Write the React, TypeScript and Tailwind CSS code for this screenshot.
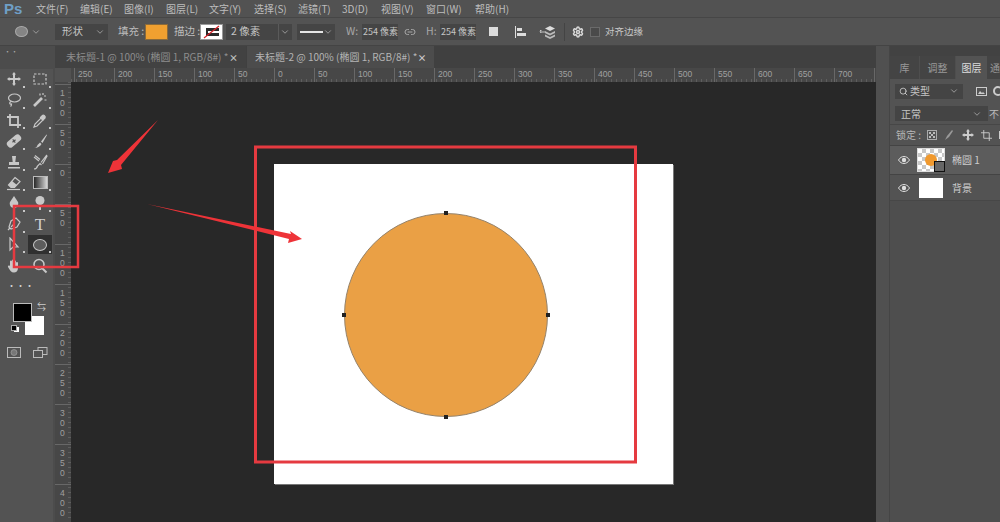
import React from 'react';
import { ChevronDown, Link2, Search, Settings } from 'lucide-react';

const menus = [
  ['文件(F)', 'w-[44px]'],
  ['编辑(E)', 'w-[44px]'],
  ['图像(I)', 'w-[42px]'],
  ['图层(L)', 'w-[43px]'],
  ['文字(Y)', 'w-[45px]'],
  ['选择(S)', 'w-[44px]'],
  ['滤镜(T)', 'w-[44px]'],
  ['3D(D)', 'w-[39px]'],
  ['视图(V)', 'w-[45px]'],
  ['窗口(W)', 'w-[49px]'],
  ['帮助(H)', 'w-[40px]'],
];

const hLabels = ['250', '200', '150', '100', '50', '0', '50', '100', '150', '200', '250', '300', '350', '400', '450', '500', '550', '600', '650', '700', ''];
const vLabels = ['100', '50', '0', '50', '100', '150', '200', '250', '300', '350', '400'];

type SvgProps = { children: React.ReactNode };
const Ic = ({ children }: SvgProps) => (
  <svg viewBox="0 0 16 16" className="w-[16px] h-[16px] text-[#c8c8c8]" fill="none" stroke="currentColor" strokeWidth="1.200">
    {children}
  </svg>
);

const tools: { icon: React.ReactNode; more?: boolean; active?: boolean }[] = [
  { more: true, icon: <Ic><path d="M8 1l2 2.500H9V7h3.500V6L15 8l-2.500 2V9H9v3.500h1L8 15l-2-2.500h1V9H3.500v1L1 8l2.500-2v1H7V3.500H6z" fill="currentColor" stroke="none" /></Ic> },
  { more: true, icon: <Ic><rect x="2" y="3" width="12" height="10" strokeDasharray="2.500 1.500" /></Ic> },
  { more: true, icon: <Ic><ellipse cx="8.500" cy="6" rx="6" ry="4" /><path d="M5 9.500c-2 1-1.500 3 .5 2.500 0 1 0 2-1 2.500" /></Ic> },
  { more: true, icon: <Ic><path d="M2 14l8-8" strokeWidth="2.600" /><path d="M11 1v2M14 4h-2M14.500 8h-2M8 1.500v2" /></Ic> },
  { more: true, icon: <Ic><path d="M1 4h11v11M4 1v11h11" strokeWidth="1.800" /></Ic> },
  { more: true, icon: <Ic><path d="M2 14l1-3 6-6 2 2-6 6z" /><path d="M8.500 4.500l2-2c1-1 3.500 1 2.500 2.500l-2 2z" fill="currentColor" /></Ic> },
  { more: true, icon: <Ic><g transform="rotate(-40 8 8)"><rect x="0" y="4.500" width="16" height="7" rx="3" fill="currentColor" stroke="none" /><path d="M6 8h4M8 6v4" stroke="#535353" /></g></Ic> },
  { more: true, icon: <Ic><path d="M2 15c2 0 3-1 3.500-3L8 9.500l1.500 1.500C8.500 13 6 15 2 15zM9 8.500L14.500 1.500l.5.5L10.500 10z" fill="currentColor" stroke="none" /></Ic> },
  { more: true, icon: <Ic><path d="M6 2h4l-.7 6h3.700v3H3V8h3.700zM2 13h12v1.500H2z" fill="currentColor" stroke="none" /></Ic> },
  { more: true, icon: <Ic><path d="M2 15c2 0 3-1 3.500-3L8 9.500l1.500 1.500M9 8.500L14.500 1.500l.5.5L10.500 10M2 3l5 4M3 1.500l5 4" /></Ic> },
  { more: true, icon: <Ic><path d="M9 2.500l5 4-5.500 6H5L2.500 10z" /><path d="M2.500 10L6 6l5 4-2.500 2.500H5z" fill="currentColor" stroke="none" /><path d="M1 14.500h13" /></Ic> },
  { more: true, icon: <svg className="w-[15px] h-[13px]" viewBox="0 0 15 13"><defs><linearGradient id="gr"><stop offset="0" stopColor="#222" /><stop offset="1" stopColor="#ddd" /></linearGradient></defs><rect x=".5" y=".5" width="14" height="12" fill="url(#gr)" stroke="#bbb" /></svg> },
  { more: true, icon: <Ic><path d="M8 1l4 6c1 3-1 6-4 6s-5-3-4-6z" fill="currentColor" stroke="none" /></Ic> },
  { more: true, icon: <Ic><circle cx="8" cy="5.500" r="4.500" fill="currentColor" stroke="none" /><path d="M8 10v5" strokeWidth="2" /></Ic> },
  { more: true, icon: <Ic><path d="M3 11L5 5 10 2l4 4-3 5-6 2zM5 11l3-3" /><path d="M2 14l2-2" /></Ic> },
  { icon: <span className="text-[#d0d0d0] text-[17px] leading-none font-['Liberation_Serif',serif]">T</span> },
  { more: true, icon: <Ic><path d="M4 1v12l3-3h5z" /></Ic> },
  { more: true, active: true, icon: <span className="block w-[14px] h-[12px] rounded-[50%] border border-[#c8c8c8] bg-[#5c5c5c]" /> },
  { icon: <Ic><path d="M4 6V3.500a1 1 0 012 0V2.500a1 1 0 012 0v1a1 1 0 012 0v1.500a1 1 0 012 0v5c0 3-2 4.500-4 4.500-3 0-4-2-6-5.500-.5-1 1-2 2-1z" fill="currentColor" stroke="none" /></Ic> },
  { icon: <Ic><circle cx="7" cy="6.500" r="5" strokeWidth="1.600" /><path d="M10.500 10.500l4 4" strokeWidth="2" /></Ic> },
];

const Tool = ({ icon, more, active }: { icon: React.ReactNode; more?: boolean; active?: boolean }) => (
  <div className="flex items-center justify-center h-[20.7px]">
    <div className={`relative w-[24px] h-[19px] flex items-center justify-center ${active ? 'bg-[#303030]' : ''}`}>
      {icon}
      {more && <span className="absolute right-[1px] bottom-[1px] w-[2px] h-[2px] bg-[#c8c8c8]" />}
    </div>
  </div>
);

const Field = ({ className, children }: { className: string; children: React.ReactNode }) => (
  <div className={`h-[16px] bg-[#454545] flex items-center text-[#c4c4c4] ${className}`}>{children}</div>
);

const Dropdown = ({ className }: { className?: string }) => (
  <ChevronDown className={`w-[10px] h-[10px] text-[#a8a8a8] shrink-0 ${className ?? ''}`} />
);

const EyeIcon = () => (
  <svg viewBox="0 0 12 8" className="ml-[8px] w-[12px] h-[8px] shrink-0">
    <path d="M.5 4C2 1.500 4 .5 6 .5s4 1 5.500 3.500C10 6.500 8 7.500 6 7.500S2 6.500.5 4z" fill="none" stroke="#dedede" />
    <circle cx="6" cy="4" r="2.200" fill="#dedede" />
  </svg>
);

export default function App() {
  return (
    <div className="w-[1000px] h-[522px] overflow-hidden relative flex flex-col bg-[#535353] text-[#bdbdbd] text-[10.500px] leading-none font-['Noto_Sans_CJK_SC','Liberation_Sans',sans-serif]">
      {/* menu */}
      <div className="h-[18px] shrink-0 flex items-center bg-[#525252] border-b border-[#464646] text-[10px]">
        <span className="w-[36px] pl-[4px] text-[#6f9fc6] text-[15px] font-bold font-['Liberation_Sans',sans-serif]">Ps</span>
        {menus.map(([label, w]) => (
          <span key={label} className={`${w} whitespace-nowrap`}>{label}</span>
        ))}
      </div>

      {/* options bar */}
      <div className="h-[28px] shrink-0 flex items-center bg-[#535353] border-b border-[#444] whitespace-nowrap">
        <div className="w-[55px] flex items-center pl-[15px] gap-[3px]">
          <span className="w-[13px] h-[11px] rounded-[50%] bg-[#858585] border border-[#aaa]" />
          <Dropdown />
        </div>
        <Field className="w-[53px] justify-between pl-[7px] pr-[3px]">形状<Dropdown /></Field>
        <span className="ml-[10px] w-[27px]">填充 :</span>
        <span className="w-[23px] h-[16px] bg-[#f0a030] border border-[#8a6a3a]" />
        <span className="ml-[6px] w-[26px]">描边 :</span>
        <span className="w-[23px] h-[16px] bg-white border border-[#999] flex items-center justify-center">
          <svg viewBox="0 0 21 14" className="w-[21px] h-[14px]"><rect x="5" y="3" width="13" height="8" fill="#2a2a2a" /><rect x="7" y="6" width="14" height="2" fill="#fff" /><path d="M3 13L18 1" stroke="#d8232a" strokeWidth="1.300" /></svg>
        </span>
        <Field className="ml-[3px] w-[66px] justify-between pl-[5px] pr-[2px]">2 像素<span className="border-l border-[#5a5a5a] pl-[1px] h-full flex items-center"><Dropdown /></span></Field>
        <Field className="ml-[5px] w-[38px] justify-between pl-[3px] pr-[2px]"><span className="w-[23px] h-[2px] bg-[#e4e4e4]" /><Dropdown /></Field>
        <span className="ml-[11px] w-[16px] text-[#a8a8a8]">W:</span>
        <Field className="w-[36px] pl-[1px] text-[9px]">254 像素</Field>
        <Link2 className="ml-[6px] w-[12px] h-[12px] text-[#a8a8a8]" />
        <span className="ml-[10px] w-[14px] text-[#a8a8a8]">H:</span>
        <Field className="w-[36px] pl-[1px] text-[9px]">254 像素</Field>
        <span className="ml-[13px] w-[9px] h-[9px] bg-[#dcdcdc]" />
        <svg viewBox="0 0 14 14" className="ml-[16px] w-[14px] h-[14px]"><path d="M1.500 1v12" stroke="#ddd" /><path d="M3 3h5v3H3zM3 8h9v3H3z" fill="#ddd" /></svg>
        <svg viewBox="0 0 18 14" className="ml-[11px] w-[18px] h-[14px]"><path d="M3 7h3M1 6l1-1v3z" stroke="#ddd" strokeWidth=".8" /><path d="M11 1l5 2.500-5 2.500-5-2.500z" fill="#ddd" /><path d="M6 6l5 2.500L16 6v2l-5 2.500L6 8zM6 9.500l5 2.500 5-2.500v2L11 14l-5-2.500z" fill="#bbb" /></svg>
        <span className="ml-[7px] w-px h-[18px] bg-[#444]" />
        <Settings strokeWidth={3} className="ml-[7px] w-[12px] h-[12px] text-[#d8d8d8]" />
        <span className="ml-[6px] w-[10px] h-[10px] bg-[#4a4a4a] border border-[#6a6a6a]" />
        <span className="ml-[5px] text-[#c8c8c8] text-[9.500px]">对齐边缘</span>
      </div>

      <div className="flex-1 flex min-h-0">
        {/* tools */}
        <div className="w-[55px] shrink-0 flex flex-col bg-[#535353] border-r-2 border-[#4c4c4c]">
          <div className="h-[23px] shrink-0 pl-[4px] pt-[2px] text-[#aaa] text-[7px] bg-[#4c4c4c]">
            <div className="h-[10px]">••</div>
          </div>
          <div className="grid grid-cols-[26px_26px] pl-[1px]">
            {tools.map((t, i) => (
              <Tool key={i} icon={t.icon} more={t.more} active={t.active} />
            ))}
          </div>
          <div className="h-[21px] pl-[7px] pt-[5px] text-[#d4d4d4] text-[9px]">•••</div>
          <div className="relative h-[44px]">
            <span className="absolute left-[13px] top-[6px] w-[19px] h-[19px] bg-black border border-[#bbb] z-10" />
            <span className="absolute left-[25px] top-[19px] w-[19px] h-[19px] bg-white" />
            <span className="absolute left-[37px] top-[5px] text-[#ccc] text-[9px]">⇆</span>
            <span className="absolute left-[14px] top-[30px] w-[5px] h-[5px] bg-white" />
            <span className="absolute left-[11px] top-[28px] w-[6px] h-[6px] bg-black border border-[#aaa]" />
          </div>
          <div className="flex items-center pl-[7px] pt-[6px] gap-[12px]">
            <svg viewBox="0 0 14 11" className="w-[14px] h-[11px]"><rect x=".5" y=".5" width="13" height="10" fill="none" stroke="#bbb" /><circle cx="7" cy="5.500" r="3" fill="#777" stroke="#aaa" strokeWidth=".6" /></svg>
            <svg viewBox="0 0 15 11" className="w-[15px] h-[11px]"><rect x="5" y=".5" width="9" height="7" fill="none" stroke="#bbb" /><rect x=".5" y="3.500" width="9" height="7" fill="#535353" stroke="#bbb" /></svg>
          </div>
        </div>

        {/* document area */}
        <div className="w-[821px] shrink-0 flex flex-col">
          <div className="h-[22px] shrink-0 flex bg-[#404040] text-[#8d8d8d] text-[10px] whitespace-nowrap">
            <div className="w-[191px] flex items-center justify-between pl-[11px] pr-[8px] bg-[#424242]">
              <span>未标题-1 @ 100% (椭圆 1, RGB/8#) *</span><span className="font-bold text-[#c0c0c0] text-[9px]">×</span>
            </div>
            <div className="ml-px w-[187px] flex items-center justify-between pl-[8px] pr-[8px] bg-[#4c4c4c] text-[#b4b4b4]">
              <span>未标题-2 @ 100% (椭圆 1, RGB/8#) *</span><span className="font-bold text-[#c8c8c8] text-[9px]">×</span>
            </div>
          </div>
          <div className="h-[14px] shrink-0 flex bg-[#474747]">
            <div className="w-[16px] shrink-0 bg-[#525252]" />
            <div className="flex-1 flex pl-[3px] bg-[repeating-linear-gradient(90deg,#5e5e5e_0,#5e5e5e_1px,transparent_1px,transparent_5px)] bg-[length:100%_3px] bg-bottom bg-no-repeat overflow-hidden">
              {hLabels.map((l, i) => (
                <div key={i} className="w-[40px] shrink-0 h-full border-l border-[#686868] pl-[3px] pt-[2px] text-[8.500px] text-[#a0a0a0] font-['Liberation_Sans',sans-serif]">{l}</div>
              ))}
            </div>
          </div>
          <div className="flex-1 flex min-h-0">
            <div className="w-[16px] shrink-0 pt-[2px] overflow-hidden bg-[#474747] bg-[repeating-linear-gradient(180deg,#5e5e5e_0,#5e5e5e_1px,transparent_1px,transparent_5px)] bg-[length:3px_100%] bg-right bg-no-repeat">
              {vLabels.map((l, i) => (
                <div key={i} className="h-[40px] border-t border-[#686868] pt-[3px] pl-[5px] flex flex-col text-[8.500px] leading-[10px] text-[#a0a0a0] font-['Liberation_Sans',sans-serif]">
                  {l.split('').map((c, j) => <span key={j}>{c}</span>)}
                </div>
              ))}
            </div>
            {/* canvas */}
            <div className="flex-1 relative bg-[#282828]">
              <div className="absolute left-[203px] top-[82px] w-[399px] h-[320px] bg-white shadow-[1px_1px_0_#777]" />
              <div className="absolute left-[273px] top-[131px] w-[204px] h-[204px] rounded-full bg-[#eaa045] border border-[#94826a]" />
              <span className="absolute left-[373px] top-[129px] w-[4px] h-[4px] bg-[#222]" />
              <span className="absolute left-[373px] top-[333px] w-[4px] h-[4px] bg-[#222]" />
              <span className="absolute left-[271px] top-[231px] w-[4px] h-[4px] bg-[#222]" />
              <span className="absolute left-[475px] top-[231px] w-[4px] h-[4px] bg-[#222]" />
            </div>
          </div>
        </div>

        <div className="w-[14px] shrink-0 bg-[#505050] border-r border-[#454545]" />

        {/* panels */}
        <div className="flex-1 flex flex-col bg-[#4e4e4e] min-w-0 text-[10px] overflow-hidden">
          <div className="h-[10px] shrink-0 bg-[#424242]" />
          <div className="h-[23px] shrink-0 flex items-center bg-[#444] text-[#999] whitespace-nowrap">
            <div className="w-[30px] shrink-0 h-full flex items-center justify-center border-r border-[#4e4e4e]">库</div>
            <div className="w-[36px] shrink-0 h-full flex items-center justify-center border-r border-[#4e4e4e]">调整</div>
            <div className="w-[31px] shrink-0 h-full flex items-center justify-center bg-[#535353] text-[#ddd]">图层</div>
            <div className="pl-[3px]">通</div>
          </div>
          <div className="h-[24px] flex items-center pl-[5px] bg-[#535353]">
            <div className="w-[68px] h-[15px] shrink-0 bg-[#444] flex items-center justify-between px-[4px] text-[#c4c4c4]">
              <span className="flex items-center gap-[2px]"><Search className="w-[9px] h-[9px] text-[#ddd]" />类型</span><Dropdown />
            </div>
            <svg viewBox="0 0 11 9" className="ml-[13px] w-[11px] h-[9px] shrink-0"><rect x=".5" y=".5" width="10" height="8" fill="none" stroke="#ccc" /><path d="M2 7l2-3 2 2 1-1 2 2z" fill="#ccc" /></svg>
            <span className="ml-[6px] w-[10px] h-[10px] shrink-0 rounded-full border-2 border-[#ccc]" />
          </div>
          <div className="h-[22px] flex items-center pl-[5px] bg-[#535353] border-b border-[#474747]">
            <div className="w-[93px] h-[15px] shrink-0 bg-[#444] flex items-center justify-between px-[6px] text-[#c4c4c4]">正常<Dropdown /></div>
            <span className="ml-[1px] shrink-0">不</span>
          </div>
          <div className="h-[21px] flex items-center pl-[6px] bg-[#535353] border-b border-[#444] text-[#b8b8b8] whitespace-nowrap">
            锁定 :
            <svg viewBox="0 0 10 10" className="ml-[6px] w-[10px] h-[10px] shrink-0"><rect x=".5" y=".5" width="9" height="9" fill="none" stroke="#aaa" /><path d="M2 2h2v2H2zM6 2h2v2H6zM4 4h2v2H4zM2 6h2v2H2zM6 6h2v2H6z" fill="#bbb" /></svg>
            <svg viewBox="0 0 10 12" className="ml-[7px] w-[10px] h-[12px] shrink-0"><path d="M1 11l2-4 5-6 1 1-4 6z" fill="#999" /></svg>
            <svg viewBox="0 0 12 12" className="ml-[8px] w-[12px] h-[12px] shrink-0"><path d="M6 0l2 2.500H7V5h2.500V4L12 6 9.500 8V7H7v2.500h1L6 12 4 9.500h1V7H2.500v1L0 6l2.500-2v1H5V2.500H4z" fill="#ccc" /></svg>
            <svg viewBox="0 0 12 12" className="ml-[7px] w-[11px] h-[11px] shrink-0"><path d="M3 0v9h9M0 3h9v9" fill="none" stroke="#ccc" /></svg>
            <span className="ml-[7px] w-[7px] h-[8px] shrink-0 bg-[#ccc]" />
          </div>
          <div className="h-[29px] flex items-center bg-[#5c5c5c] border-b border-[#444]">
            <EyeIcon />
            <div className="ml-[7px] relative w-[28px] h-[24px] shrink-0 border border-[#ddd] flex items-center justify-center bg-[repeating-conic-gradient(#c8c8c8_0_25%,#fff_0_50%)] bg-[length:8px_8px]">
              <span className="w-[12px] h-[12px] rounded-full bg-[#f0992e]" />
              <span className="absolute right-[-1px] bottom-[-1px] w-[11px] h-[11px] bg-[#666] border border-[#111]" />
            </div>
            <span className="ml-[7px] text-[#cdcdcd] whitespace-nowrap">椭圆 1</span>
          </div>
          <div className="h-[26px] flex items-center bg-[#535353] border-b border-[#474747]">
            <EyeIcon />
            <span className="ml-[9px] w-[24px] h-[20px] shrink-0 bg-white" />
            <span className="ml-[9px] text-[#cdcdcd]">背景</span>
          </div>
        </div>
      </div>

      {/* red annotations drawn over the screenshot */}
      <svg viewBox="0 0 1000 522" className="absolute inset-0 w-[1000px] h-[522px] pointer-events-none">
        <rect x="255.500" y="147" width="380" height="315" fill="none" stroke="#e53a40" strokeWidth="3" />
        <rect x="14" y="206" width="64" height="61" fill="none" stroke="#e53a40" strokeWidth="2.500" />
        <polygon points="158,120 117,160 113,161 108,173 122,169 121,165" fill="#ee3338" />
        <polygon points="147,204 291,234 290,231 302,239 288,243 289,239" fill="#ee3338" />
      </svg>
    </div>
  );
}
